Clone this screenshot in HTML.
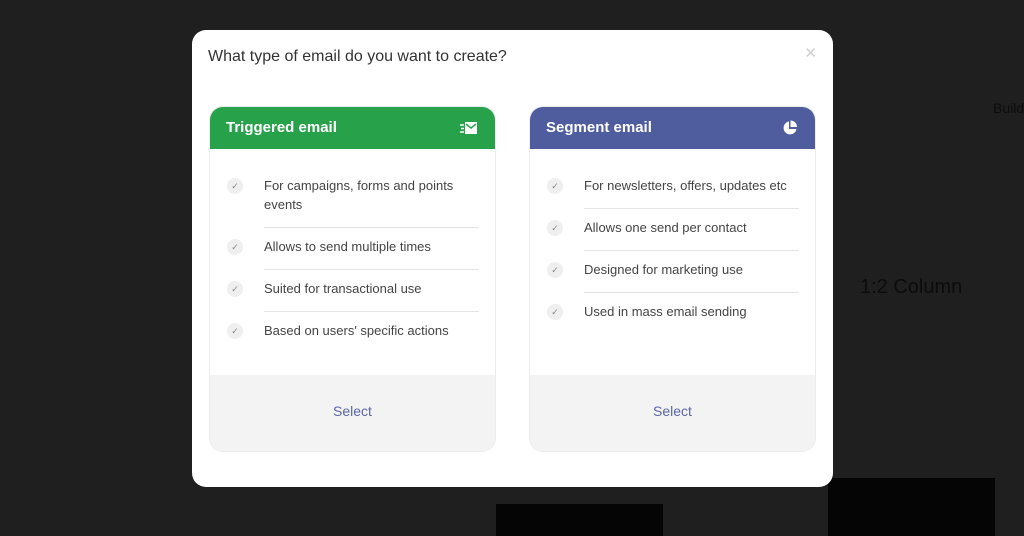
<!DOCTYPE html>
<html><head><style>
*{box-sizing:border-box;margin:0;padding:0}
body{width:1024px;height:536px;background:#1f1f1f;font-family:"Liberation Sans",sans-serif;position:relative;overflow:hidden}
.bg{position:absolute;color:#0c0c0c;font-size:20px}
.modal{position:absolute;left:192px;top:30px;width:641px;height:457px;background:#fff;border-radius:14px}
h1{position:absolute;left:16px;top:18px;font-size:16px;font-weight:normal;color:#333}
.x{position:absolute;right:16px;top:14px;color:#d0d0d0;font-size:15px}
.card{position:absolute;top:76px;width:287px;height:346px;border:1px solid #ececec;border-radius:14px;overflow:hidden;background:#fff}
.hd{height:42px;color:#fff;font-weight:bold;font-size:15px;padding:12px 16px;position:relative}
.hd svg{position:absolute;right:17px;top:13px}
ul{list-style:none;padding:18px 16px 0 17px}
li{position:relative;padding-left:37px;font-size:13px;color:#444;line-height:19px}
li .t{border-bottom:1px solid #e4e4e4;padding:9px 0 13px}
li:last-child .t{border-bottom:none}
li .c{position:absolute;left:0;top:11px;width:16px;height:16px;border-radius:50%;background:#efefef;color:#888;font-size:9px;text-align:center;line-height:16px}
.ft{position:absolute;left:0;right:0;bottom:0;height:76px;background:#f3f3f3;text-align:center;line-height:72px;color:#5a66a8;font-size:14px}
</style></head><body>
<div class="bg" style="left:860px;top:276px">1:2 Column</div>
<div class="bg" style="left:993px;top:100px;font-size:14px">Build</div>
<div style="position:absolute;left:496px;top:504px;width:167px;height:32px;background:#050505"></div>
<div style="position:absolute;left:828px;top:478px;width:167px;height:58px;background:#050505"></div>
<div class="modal">
<h1>What type of email do you want to create?</h1>
<div class="x">✕</div>
<div class="card" style="left:17px">
<div class="hd" style="background:#27a24a">Triggered email
<svg width="18" height="16" viewBox="0 0 18 16"><rect x="5" y="2" width="12" height="12" fill="#fff"/><path d="M6 4l5 4 5-4" stroke="#27a24a" stroke-width="1.5" fill="none"/><path d="M0 5h4M1 8.5h3M0 12h4" stroke="#fff" stroke-width="1.5"/></svg></div>
<ul>
<li><span class="c">✓</span><div class="t">For campaigns, forms and points events</div></li>
<li><span class="c">✓</span><div class="t">Allows to send multiple times</div></li>
<li><span class="c">✓</span><div class="t">Suited for transactional use</div></li>
<li><span class="c">✓</span><div class="t">Based on users' specific actions</div></li>
</ul>
<div class="ft">Select</div>
</div>
<div class="card" style="left:337px">
<div class="hd" style="background:#4f5d9e">Segment email
<svg width="16" height="16" viewBox="0 0 16 16"><path d="M7 1.5A6.5 6.5 0 1 0 14.5 9H7z" fill="#fff"/><path d="M8.5 0.5A6.5 6.5 0 0 1 15 7H8.5z" fill="#fff"/></svg></div>
<ul>
<li><span class="c">✓</span><div class="t">For newsletters, offers, updates etc</div></li>
<li><span class="c">✓</span><div class="t">Allows one send per contact</div></li>
<li><span class="c">✓</span><div class="t">Designed for marketing use</div></li>
<li><span class="c">✓</span><div class="t">Used in mass email sending</div></li>
</ul>
<div class="ft">Select</div>
</div>
</div>
</body></html>
